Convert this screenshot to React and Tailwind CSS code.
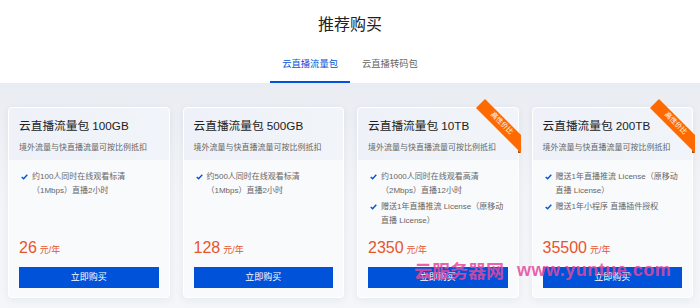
import React from "react";

const plans = [
  {
    name: "云直播流量包 100GB",
    price: "26",
    hot: false,
    features: ["约100人同时在线观看标清（1Mbps）直播2小时"],
  },
  {
    name: "云直播流量包 500GB",
    price: "128",
    hot: false,
    features: ["约500人同时在线观看标清（1Mbps）直播2小时"],
  },
  {
    name: "云直播流量包 10TB",
    price: "2350",
    hot: true,
    features: [
      "约1000人同时在线观看高清（2Mbps）直播12小时",
      "赠送1年直播推流 License（原移动直播 License）",
    ],
  },
  {
    name: "云直播流量包 200TB",
    price: "35500",
    hot: true,
    features: [
      "赠送1年直播推流 License（原移动直播 License）",
      "赠送1年小程序 直播插件授权",
    ],
  },
];

const Check = () => (
  <svg width="7" height="6" viewBox="0 0 7 6" className="mt-[4px]">
    <polyline points="0.7,3 2.6,4.8 6.3,0.8" fill="none" stroke="#0052d9" strokeWidth="1.4" />
  </svg>
);

const Ribbon = () => (
  <>
    <svg width="50" height="60" viewBox="0 0 50 60" className="absolute right-[-5px] top-[-10px] overflow-visible">
      <polygon points="3,10 12,1 48,37 48,55" fill="#ff6a00" />
      <polygon points="45,52 48,55 45,55" fill="#b84a00" />
    </svg>
    <span className="absolute right-[16px] top-[15px] translate-x-1/2 -translate-y-1/2 rotate-45 text-[7px] leading-none text-white whitespace-nowrap">
      高性价比
    </span>
  </>
);

const PlanCard = ({ plan }) => (
  <div className="relative flex h-[191px] flex-col rounded-[4px] border border-white bg-[#f9fafc] shadow-[0_2px_8px_rgba(30,50,90,0.07)]">
    {plan.hot && <Ribbon />}

    {/* header */}
    <div className="h-[52px] rounded-t-[4px] bg-gradient-to-r from-[#eef2f8] to-[#f1f4f9] px-[10px] pt-[10px]">
      <h3 className="text-[11.7px] leading-[16px] text-[#222]">{plan.name}</h3>
      <p className="mt-[8px] text-[8px] leading-[12px] text-[#666]">境外流量与快直播流量可按比例抵扣</p>
    </div>

    {/* body */}
    <div className="flex flex-1 flex-col px-[10px] pt-[10px] pb-[9px]">
      <ul className="flex flex-col gap-[2px]">
        {plan.features.map((f) => (
          <li key={f} className="flex items-start text-[8px] leading-[14px] text-[#666]">
            <span className="flex w-[13px] shrink-0 pl-[2px]">
              <Check />
            </span>
            <span>{f}</span>
          </li>
        ))}
      </ul>

      <div className="mt-auto flex items-baseline gap-[3px] leading-[20px] text-[#e8542d]">
        <span className="text-[16px]">{plan.price}</span>
        <span className="text-[9px]">元/年</span>
      </div>

      <button className="mt-[7px] h-[21px] w-full bg-[#0052d9] text-[9px] text-white">立即购买</button>
    </div>
  </div>
);

export default function App() {
  return (
    <div
      className="relative h-[308px] w-[700px] overflow-hidden bg-[#f4f6f9]"
      style={{ fontFamily: '"Liberation Sans", "Noto Sans CJK SC", sans-serif' }}
    >
      {/* Header */}
      <div className="flex h-[83px] flex-col items-center bg-white">
        <h2 className="mt-[13px] text-[16px] leading-[24px] text-[#222]">推荐购买</h2>
        <div className="mt-[20px] flex">
          <div className="border-b-2 border-[#0052d9] px-[12px] pb-[10px] text-[9.3px] leading-[14px] text-[#0052d9]">
            云直播流量包
          </div>
          <div className="border-b-2 border-transparent px-[12px] pb-[10px] text-[9.3px] leading-[14px] text-[#666]">
            云直播转码包
          </div>
        </div>
      </div>

      {/* Cards */}
      <div className="h-[225px] bg-gradient-to-b from-[#e9ecf2] via-[#f3f5f8] to-[#f4f6f9] pt-[24px] pl-[8px] pr-[7px]">
        <div className="grid grid-cols-4 gap-[13px]">
          {plans.map((p) => (
            <PlanCard key={p.name} plan={p} />
          ))}
        </div>
      </div>

      {/* watermark */}
      <div
        className="pointer-events-none absolute left-[414px] top-[259px] flex items-center gap-[13px] text-[18px] font-bold leading-[22px] text-[rgba(228,72,158,0.85)]"
        style={{ fontFamily: '"Noto Sans CJK SC", sans-serif' }}
      >
        <span>云服务器网</span>
        <span className="tracking-[0.5px]" style={{ fontFamily: '"Liberation Sans", sans-serif' }}>www.yuntue.com</span>
      </div>
    </div>
  );
}
